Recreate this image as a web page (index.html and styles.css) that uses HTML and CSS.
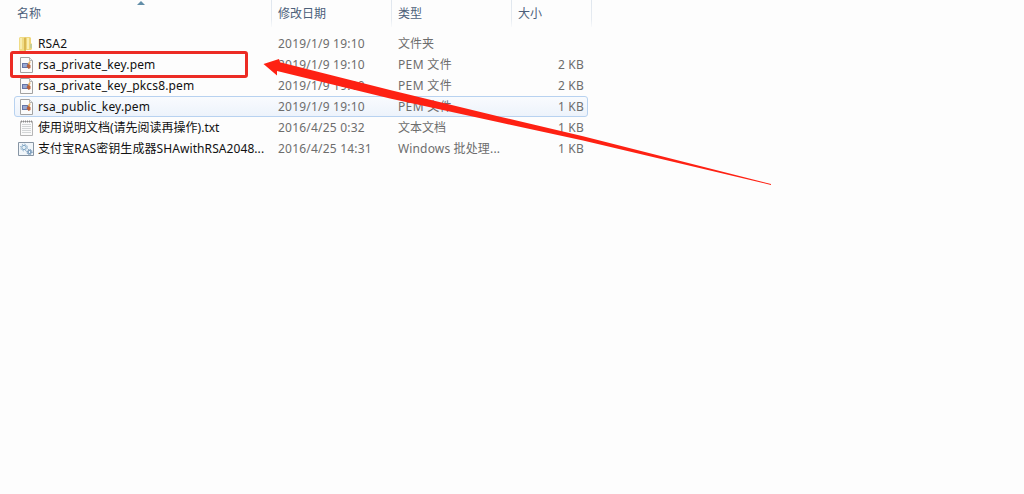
FILE: index.html
```
<!DOCTYPE html>
<html lang="zh">
<head>
    <meta charset="UTF-8">
    <title>RSA</title>
    <link rel="stylesheet" href="styles.css">
</head>
<body>
    <!-- shared file icons -->
    <svg class="defs" width="0" height="0">
        <symbol id="icon-folder" viewBox="0 0 16 16">
            <path d="M1 2l1-1h5v14H2l-1-1z" fill="#f0dc86"/>
            <path d="M2 2h2v11H2z" fill="#f8edb0"/>
            <path d="M6 2l2-1v14l-2-.5z" fill="#d9b752"/>
            <path d="M8 1h4l1 1v5l1 1v5l-1 1H8z" fill="#efd67a"/>
            <path d="M9 2h2v11H9z" fill="#faefb4"/>
            <path d="M12.500 8h1v4h-1z" fill="#9cc4b4"/>
        </symbol>
        <symbol id="icon-pem" viewBox="0 0 16 16">
            <path d="M2.500.5h9l3 3v12h-12z" fill="#fbfbfb" stroke="#a2a2a2"/>
            <path d="M11.500.5v3h3" fill="#ececec" stroke="#b4b4b4"/>
            <path d="M4 6h7v5H4z" fill="#6574a6"/>
            <path d="M5 7h4v3H5z" fill="#98a9d4"/>
            <path d="M9.500 7l2-3 1.200.8L11.500 8z" fill="#e6ae62"/>
            <path d="M8.500 9l2-2 2 1v3l-2 1z" fill="#b9603a"/>
        </symbol>
        <symbol id="icon-txt" viewBox="0 0 16 16">
            <path d="M2.500 1.500h12v14h-12z" fill="#fafafa" stroke="#b5b5b5"/>
            <path d="M4 4.500h9M4 6.500h9M4 8.500h9M4 10.500h9M4 12.500h9" stroke="#d3d6d7"/>
            <path d="M3 1.500h11" stroke="#8c8c8c" stroke-width="2" stroke-dasharray="1 1"/>
        </symbol>
        <symbol id="icon-bat" viewBox="0 0 16 16">
            <path d="M.5 1.500h15v13H.5z" fill="#f1f6fa" stroke="#8795a4"/>
            <circle cx="6" cy="6.500" r="2.200" fill="#e4f0f7" stroke="#7da4c3"/>
            <circle cx="6" cy="6.500" r="3.400" fill="none" stroke="#7da4c3" stroke-dasharray="1.300 1.370"/>
            <circle cx="11.500" cy="11" r="1.600" fill="#f1f6fa" stroke="#4b78a3"/>
            <circle cx="11.500" cy="11" r="2.600" fill="none" stroke="#4b78a3" stroke-dasharray="1 1.040"/>
        </symbol>
    </svg>

    <div class="explorer">
        <div class="header">
            <div class="head name-col">名称</div>
            <div class="head date-col">修改日期</div>
            <div class="head type-col">类型</div>
            <div class="head size-col">大小</div>
            <svg class="sort" viewBox="0 0 8 4"><path d="M0 4l4-4 4 4z" fill="#628ea8"/></svg>
        </div>

        <div class="files">
            <div class="row">
                <svg class="icon"><use href="#icon-folder"/></svg>
                <div class="name">RSA2</div>
                <div class="date">2019/1/9 19:10</div>
                <div class="type">文件夹</div>
                <div class="size"></div>
            </div>
            <div class="row">
                <svg class="icon"><use href="#icon-pem"/></svg>
                <div class="name">rsa_private_key.pem</div>
                <div class="date">2019/1/9 19:10</div>
                <div class="type pem">PEM 文件</div>
                <div class="size">2 KB</div>
            </div>
            <div class="row">
                <svg class="icon"><use href="#icon-pem"/></svg>
                <div class="name">rsa_private_key_pkcs8.pem</div>
                <div class="date">2019/1/9 19:10</div>
                <div class="type pem">PEM 文件</div>
                <div class="size">2 KB</div>
            </div>
            <div class="row selected">
                <svg class="icon"><use href="#icon-pem"/></svg>
                <div class="name">rsa_public_key.pem</div>
                <div class="date">2019/1/9 19:10</div>
                <div class="type pem">PEM 文件</div>
                <div class="size">1 KB</div>
            </div>
            <div class="row">
                <svg class="icon"><use href="#icon-txt"/></svg>
                <div class="name name-txt">使用说明文档(请先阅读再操作).txt</div>
                <div class="date">2016/4/25 0:32</div>
                <div class="type">文本文档</div>
                <div class="size">1 KB</div>
            </div>
            <div class="row">
                <svg class="icon"><use href="#icon-bat"/></svg>
                <div class="name name-bat">支付宝RAS密钥生成器SHAwithRSA2048...</div>
                <div class="date">2016/4/25 14:31</div>
                <div class="type bat">Windows 批处理...</div>
                <div class="size">1 KB</div>
            </div>
        </div>

        <div class="mark-box"></div>
        <svg class="arrow" viewBox="0 0 520 140">
            <path d="M3.500 14L19 9l1 3.200L130 40l110 26.700 83 19.600L511 134v1L323 90.500 240 72.500 130 48.500 17 21v4.500z" fill="#fe2113"/>
        </svg>
    </div>
</body>
</html>
```
FILE: styles.css
```
body {
    margin: 0;
    background-color: #fdfdfd;
    font-family: "Noto Sans", "Noto Sans CJK SC", sans-serif;
    font-size: 12px;
    color: #6d6d6d;
}

.defs {
    position: absolute;
}

.explorer {
    position: relative;
    height: 494px;
    overflow: hidden;
}

.header {
    display: flex;
    height: 27px;
    padding-left: 11px;
    color: #4c607a;
}

.head {
    box-sizing: border-box;
    height: 27px;
    padding-left: 6px;
    line-height: 27px;
    border-right: 1px solid;
    border-image: linear-gradient(#dfe6ee, #e6ebf1 70%, #fafbfc) 1;
}

.name-col {
    width: 261px;
}

.date-col,
.type-col {
    width: 120px;
}

.size-col {
    width: 80px;
}

.sort {
    position: absolute;
    left: 137px;
    top: 1px;
    width: 8px;
    height: 4px;
}

.files {
    width: 574px;
    padding: 6px 0 0 14px;
}

.row {
    display: flex;
    align-items: center;
    box-sizing: border-box;
    height: 21px;
    padding: 0 3px;
    border: 1px solid transparent;
    border-radius: 3px;
    line-height: 19px;
    white-space: nowrap;
}

.selected {
    border-color: #b8d2f0;
    background: linear-gradient(#f9fbfe, #edf3fb);
}

.icon {
    width: 16px;
    height: 16px;
    margin-right: 4px;
}

.name {
    width: 240px;
    color: #111;
    letter-spacing: 0.15px;
}

.name-txt {
    letter-spacing: 0;
}

.name-bat {
    letter-spacing: 0.08px;
}

.date {
    width: 120px;
    letter-spacing: 0.21px;
}

.type {
    width: 120px;
}

.pem {
    letter-spacing: 0.35px;
}

.bat {
    letter-spacing: 0.15px;
}

.size {
    width: 66px;
    text-align: right;
    letter-spacing: 0.2px;
}

.mark-box {
    position: absolute;
    left: 10px;
    top: 51px;
    box-sizing: border-box;
    width: 238px;
    height: 27px;
    border: 3px solid #ec2b24;
    border-radius: 3px;
}

.arrow {
    position: absolute;
    left: 260px;
    top: 50px;
    width: 520px;
    height: 140px;
}
```
